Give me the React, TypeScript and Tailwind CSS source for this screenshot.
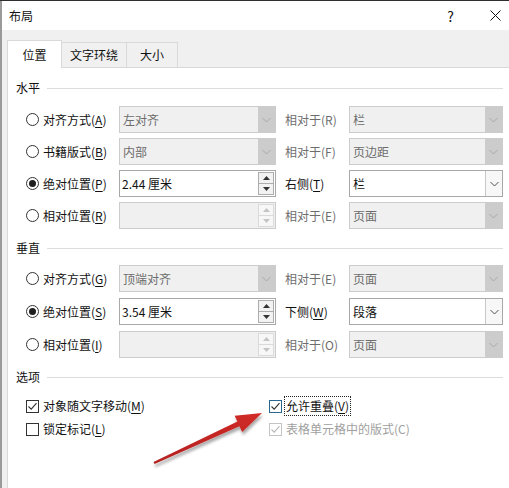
import React from "react";

type RowProps = {
  label: string;
  hotkey: string;
  checked?: boolean;
  field: React.ReactNode;
  relLabel: string;
  relKey: string;
  relEnabled?: boolean;
  relField: React.ReactNode;
};

function Key({ k }: { k: string }) {
  return (
    <>
      (<span className="underline underline-offset-[2px] decoration-1">{k}</span>)
    </>
  );
}

function Radio({ checked }: { checked?: boolean }) {
  return (
    <span className="w-[13px] h-[13px] rounded-full border border-[#333333] bg-white flex items-center justify-center shrink-0">
      {checked && <span className="w-[7px] h-[7px] rounded-full bg-[#1f1f1f]" />}
    </span>
  );
}

function Check({ checked, disabled, focus }: { checked?: boolean; disabled?: boolean; focus?: boolean }) {
  const border = disabled ? "border-[#c4c4c4]" : focus ? "border-[#2a6790]" : "border-[#333333]";
  const stroke = disabled ? "#b8b8b8" : "#333333";
  return (
    <span className={`w-[13px] h-[13px] border ${border} bg-white flex items-center justify-center shrink-0`}>
      {checked && (
        <svg width="11" height="11" viewBox="0 0 11 11">
          <path d="M1.5 5.5 L4.2 8.2 L9.5 2.2" fill="none" stroke={stroke} strokeWidth="1.1" />
        </svg>
      )}
    </span>
  );
}

function Chevron({ color }: { color: string }) {
  return (
    <svg width="9" height="6" viewBox="0 0 9 6">
      <path d="M0.5 1 L4.5 5 L8.5 1" fill="none" stroke={color} strokeWidth="1" />
    </svg>
  );
}

function Select({ value, disabled }: { value?: string; disabled?: boolean }) {
  return (
    <div
      className={`h-[27px] flex border ${
        disabled ? "border-[#cccccc] bg-[#f0f0f0] text-[#6d6d6d]" : "border-[#a8a8a8] bg-white text-[#111]"
      }`}
    >
      <span className="flex-1 flex items-center pl-[3px]">{value}</span>
      <span
        className={`w-[17px] flex items-center justify-center ${
          disabled ? "bg-[#cccccc]" : "bg-[#f7f7f7] border-l border-[#c8c8c8]"
        }`}
      >
        <Chevron color={disabled ? "#a9a9a9" : "#505050"} />
      </span>
    </div>
  );
}

function Spin({ value, disabled }: { value?: string; disabled?: boolean }) {
  const btn = disabled ? "border-[#dadada] bg-[#f7f7f7]" : "border-[#adadad] bg-[#f2f2f2]";
  const tri = disabled ? "#c4c4c4" : "#333333";
  return (
    <div
      className={`h-[27px] flex border ${
        disabled ? "border-[#cccccc] bg-[#f0f0f0]" : "border-[#a8a8a8] bg-white"
      }`}
    >
      <span className="flex-1 flex items-center pl-[2px] text-[#111]">{value}</span>
      <span className="w-[16px] flex flex-col my-[1px] mr-[1px]">
        <span className={`flex-1 border ${btn} flex items-center justify-center`}>
          <svg width="7" height="4" viewBox="0 0 7 4">
            <path d="M0 4 L3.5 0 L7 4 Z" fill={tri} />
          </svg>
        </span>
        <span className={`flex-1 border border-t-0 ${btn} flex items-center justify-center`}>
          <svg width="7" height="4" viewBox="0 0 7 4">
            <path d="M0 0 L3.5 4 L7 0 Z" fill={tri} />
          </svg>
        </span>
      </span>
    </div>
  );
}

function Section({ title }: { title: string }) {
  return (
    <div className="flex items-center gap-[7px] h-[16px] text-[#111]">
      <span>{title}</span>
      <span className="flex-1 h-px bg-[#dcdcdc]" />
    </div>
  );
}

function PosRow({ label, hotkey, checked, field, relLabel, relKey, relEnabled, relField }: RowProps) {
  return (
    <div className="grid grid-cols-[93px_157px_9px_64px_154px] h-[27px] pl-[10px] items-center">
      <div className="flex items-center gap-[4px] text-[#111]">
        <Radio checked={checked} />
        <span>
          {label}
          <Key k={hotkey} />
        </span>
      </div>
      {field}
      <span />
      <span className={relEnabled ? "text-[#111]" : "text-[#6d6d6d]"}>
        {relLabel}
        {relEnabled ? <Key k={relKey} /> : `(${relKey})`}
      </span>
      {relField}
    </div>
  );
}

function RedArrow() {
  return (
    <svg className="absolute left-0 top-0 pointer-events-none" width="509" height="488" viewBox="0 0 509 488">
      <defs>
        <filter id="arrowShadow" x="-20%" y="-20%" width="140%" height="160%">
          <feDropShadow dx="1" dy="3" stdDeviation="1.6" floodColor="#000" floodOpacity="0.35" />
        </filter>
        <linearGradient id="arrowFill" x1="0" y1="1" x2="1" y2="0">
          <stop offset="0" stopColor="#b3201f" />
          <stop offset="1" stopColor="#d12b27" />
        </linearGradient>
      </defs>
      <polygon
        points="153.5,460.9 237.4,420.6 234.6,414.7 262,412 242.2,431.1 239.4,425.2 154.5,463.1"
        fill="url(#arrowFill)"
        filter="url(#arrowShadow)"
      />
    </svg>
  );
}

export default function App() {
  return (
    <div className="relative w-[509px] h-[488px] overflow-hidden bg-[#f0f0f0] border-t border-[#2e2e2e] text-[12px] leading-[16px] font-['Noto_Sans_CJK_SC','Microsoft_YaHei',sans-serif]">
      <div className="absolute left-0 top-0 bottom-0 w-[2px] bg-[#9a9a9a]" />

      {/* title bar */}
      <div className="h-[29px] bg-white flex items-center pl-[9px] pr-[8px] text-[#111]">
        <span className="flex-1">布局</span>
        <span className="text-[14px] mr-[36px]">?</span>
        <svg width="11" height="11" viewBox="0 0 11 11">
          <path d="M0.5 0.5 L10.5 10.5 M10.5 0.5 L0.5 10.5" stroke="#111" strokeWidth="1" />
        </svg>
      </div>

      {/* tabs */}
      <div className="flex items-end h-[37px] pl-[7px]">
        <div className="relative z-10 -mb-px h-[28px] w-[55px] bg-white border-x border-t border-[#d9d9d9] flex items-center justify-center text-[#111]">
          位置
        </div>
        <div className="h-[25px] w-[65px] border-t border-r border-[#d9d9d9] flex items-center justify-center text-[#111]">
          文字环绕
        </div>
        <div className="h-[25px] w-[51px] border-t border-r border-[#d9d9d9] flex items-center justify-center text-[#111]">
          大小
        </div>
      </div>

      {/* tab page */}
      <div className="ml-[7px] h-[430px] bg-white border-l border-t border-[#d9d9d9] pl-[8px] pr-[6px]">
        <div className="mt-[12px]">
          <Section title="水平" />
        </div>
        <div className="mt-[10px] flex flex-col gap-[5px]">
          <PosRow
            label="对齐方式"
            hotkey="A"
            field={<Select value="左对齐" disabled />}
            relLabel="相对于"
            relKey="R"
            relField={<Select value="栏" disabled />}
          />
          <PosRow
            label="书籍版式"
            hotkey="B"
            field={<Select value="内部" disabled />}
            relLabel="相对于"
            relKey="F"
            relField={<Select value="页边距" disabled />}
          />
          <PosRow
            label="绝对位置"
            hotkey="P"
            checked
            field={<Spin value="2.44 厘米" />}
            relLabel="右侧"
            relKey="T"
            relEnabled
            relField={<Select value="栏" />}
          />
          <PosRow
            label="相对位置"
            hotkey="R"
            field={<Spin disabled />}
            relLabel="相对于"
            relKey="E"
            relField={<Select value="页面" disabled />}
          />
        </div>

        <div className="mt-[11px]">
          <Section title="垂直" />
        </div>
        <div className="mt-[9px] flex flex-col gap-[6px]">
          <PosRow
            label="对齐方式"
            hotkey="G"
            field={<Select value="顶端对齐" disabled />}
            relLabel="相对于"
            relKey="E"
            relField={<Select value="页面" disabled />}
          />
          <PosRow
            label="绝对位置"
            hotkey="S"
            checked
            field={<Spin value="3.54 厘米" />}
            relLabel="下侧"
            relKey="W"
            relEnabled
            relField={<Select value="段落" />}
          />
          <PosRow
            label="相对位置"
            hotkey="I"
            field={<Spin disabled />}
            relLabel="相对于"
            relKey="O"
            relField={<Select value="页面" disabled />}
          />
        </div>

        <div className="mt-[11px]">
          <Section title="选项" />
        </div>
        <div className="mt-[11px] pl-[10px] grid grid-cols-[243px_1fr] gap-y-[3px]">
          <div className="h-[20px] flex items-center gap-[4px] text-[#111]">
            <Check checked />
            <span>
              对象随文字移动
              <Key k="M" />
            </span>
          </div>
          <div className="h-[20px] flex items-center gap-[3px] text-[#111]">
            <Check checked focus />
            <span className="outline outline-1 outline-dotted outline-[#222] px-[1px] py-[1px]">
              允许重叠
              <Key k="V" />
            </span>
          </div>
          <div className="h-[20px] flex items-center gap-[4px] text-[#111]">
            <Check />
            <span>
              锁定标记
              <Key k="L" />
            </span>
          </div>
          <div className="h-[20px] flex items-center gap-[4px] text-[#a0a0a0]">
            <Check checked disabled />
            <span>表格单元格中的版式(C)</span>
          </div>
        </div>
      </div>

      <RedArrow />
    </div>
  );
}
